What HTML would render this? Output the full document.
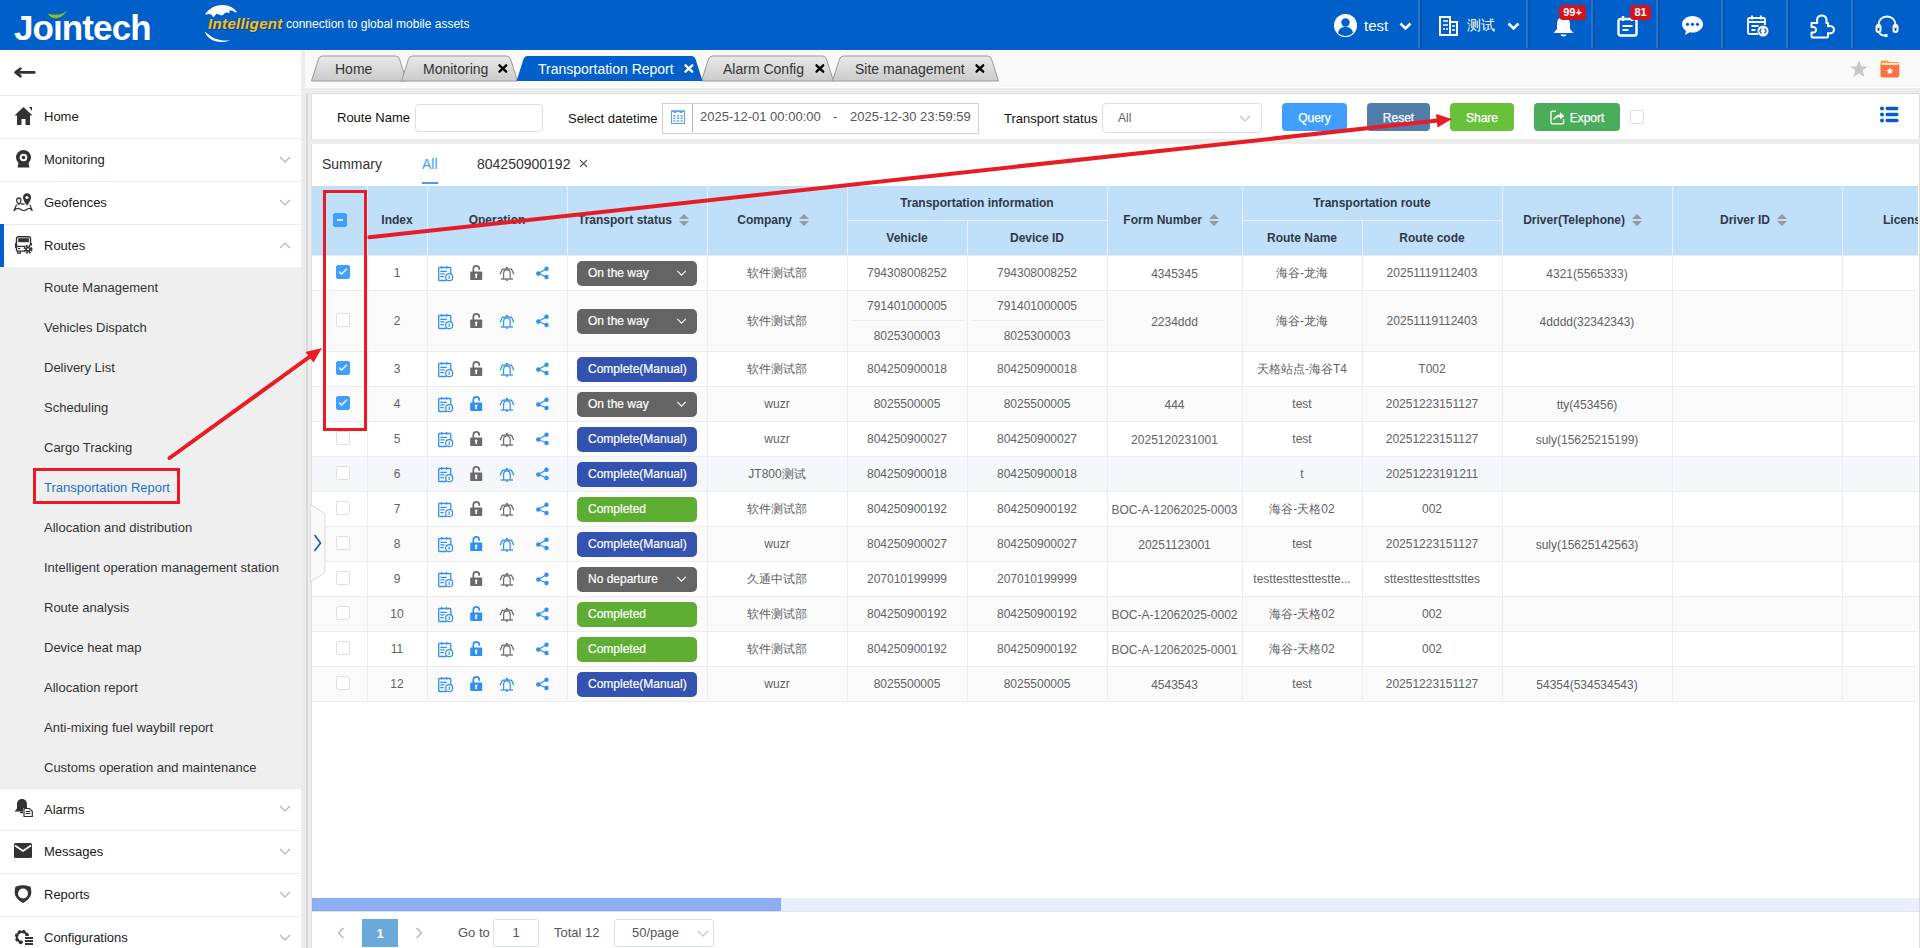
<!DOCTYPE html><html><head><meta charset="utf-8"><title>Transportation Report</title><style>
*{box-sizing:border-box;margin:0;padding:0}
html,body{width:1920px;height:948px;overflow:hidden}
body{position:relative;font-family:"Liberation Sans",sans-serif;background:#ececec;color:#333}
.a{position:absolute}
.t{position:absolute;white-space:nowrap;line-height:1}
svg{display:block;position:absolute;overflow:visible}
.sep{position:absolute;top:0;width:4px;height:48px;border-left:2px solid #2472d0;border-right:2px solid #0b52a8}
.mi{position:absolute;left:0;width:301px;height:43px;background:#fff;border-top:1px solid #e8eaf0}
.mi .tx{position:absolute;left:44px;top:14px;font-size:13px;color:#1a1a1a;line-height:1;white-space:nowrap}
.sm{position:absolute;left:44px;font-size:13px;color:#333;line-height:1;white-space:nowrap}
.cell{position:absolute;text-align:center;white-space:nowrap;line-height:1;font-size:12px;color:#606266}
.hd{position:absolute;text-align:center;white-space:nowrap;line-height:1;font-size:12px;font-weight:bold;color:#2f3847}
.hdl{position:absolute;white-space:nowrap;line-height:1;font-size:12px;font-weight:bold;color:#2f3847}
.vl{position:absolute;width:1px;background:#ebeef5}
.hl{position:absolute;height:1px;background:#ebeef5}
.cb{position:absolute;width:14px;height:14px;border:1px solid #dcdfe6;border-radius:2px;background:#fff}
.cbon{background:#409eff;border-color:#409eff}
.st{position:absolute;left:577px;width:120px;height:25px;border-radius:5px;color:#fff;font-size:12px;line-height:25px;padding-left:11px;white-space:nowrap;-webkit-text-stroke:0.2px #fff}
.btn{position:absolute;top:103px;height:28px;border-radius:4px;color:#fff;font-size:12px;line-height:30px;text-align:center;-webkit-text-stroke:0.25px #fff}
</style></head><body>
<div class="a" style="left:0;top:0;width:1920px;height:50px;background:#005fc8"></div>
<div class="t" style="left:14px;top:10px;font-size:35px;font-weight:bold;color:#fff;letter-spacing:-0.9px">Jo&#305;ntech</div>
<svg style="left:47px;top:9px" width="22" height="12" viewBox="0 0 22 12"><path d="M1 4.5 C3.5 10.5 13 12.5 20.5 1 C15 6.2 8 7 1 4.5Z" fill="#86c11c"/></svg>
<svg style="left:204px;top:4px" width="36" height="38" viewBox="0 0 36 38"><path d="M1 10.5 C5 4 12 1 19 1 C25 1 30 4 33 8 L31 8.5 C29 6.5 27 6 25 7 C26 8 26 9 24 9 C22 8 21 9 20 10 C19 11 18 12 16 11 C15 10 14 10 12 10 C11 12 10 13 9 13 C8 11 7 10 5 10 C4 10 3 10.5 1 10.5Z" fill="#fff"/><path d="M0.5 27.5 C3 34 10 38 17 38 C20 38 23 37.5 26 36.5 C20 37 13 36 8 33 C5 31 3 29 0.5 27.5Z" fill="#fff"/></svg>
<div class="t" style="left:208px;top:16px;font-size:15px;letter-spacing:0.35px;font-weight:bold;font-style:italic;color:#fdc010;text-shadow:1px 1px 1px rgba(0,40,100,.5)">Intelligent</div>
<div class="t" style="left:286px;top:18px;font-size:12px;color:#fff">connection to global mobile assets</div>
<div class="sep" style="left:1418px"></div>
<div class="sep" style="left:1526px"></div>
<div class="sep" style="left:1591px"></div>
<div class="sep" style="left:1656px"></div>
<div class="sep" style="left:1721px"></div>
<div class="sep" style="left:1786px"></div>
<div class="sep" style="left:1851px"></div>
<svg style="left:1334px;top:14px" width="23" height="23" viewBox="0 0 23 23"><circle cx="11.5" cy="11.5" r="11.5" fill="#fff"/><circle cx="11.5" cy="8.5" r="4.2" fill="#005fc8"/><path d="M4 19 C5 14 8 13 11.5 13 C15 13 18 14 19 19 C17 21 14 22 11.5 22 C9 22 6 21 4 19Z" fill="#005fc8"/></svg>
<div class="t" style="left:1364px;top:18px;font-size:15px;color:#fff">test</div>
<svg style="left:1399px;top:22px" width="13" height="9" viewBox="0 0 13 9"><path d="M1.5 1.5 L6.5 6.5 L11.5 1.5" fill="none" stroke="#fff" stroke-width="2.6"/></svg>
<svg style="left:1439px;top:16px" width="19" height="20" viewBox="0 0 19 20"><path d="M1 1 H11 V19 H1Z M11 6 H18 V19 H11" fill="none" stroke="#fff" stroke-width="2"/><path d="M4 5h5M4 9h5M4 13h2M7 13h2M13 10h3M13 14h3" stroke="#fff" stroke-width="1.6"/></svg>
<div class="t" style="left:1467px;top:18px;font-size:14px;color:#fff">测试</div>
<svg style="left:1507px;top:22px" width="13" height="9" viewBox="0 0 13 9"><path d="M1.5 1.5 L6.5 6.5 L11.5 1.5" fill="none" stroke="#fff" stroke-width="2.6"/></svg>
<svg style="left:1552px;top:16px" width="23" height="22" viewBox="0 0 23 22"><path d="M11.5 1 C6 1 5 5 5 9 V13 L1.5 17 H21.5 L18 13 V9 C18 5 17 1 11.5 1Z" fill="#fff"/><path d="M8.5 18.5 C9 21 14 21 14.5 18.5Z" fill="#fff"/></svg>
<div class="a" style="left:1559px;top:5px;width:27px;height:15px;background:#d4141c;border-radius:4px"></div>
<div class="t" style="left:1561px;top:7px;font-size:11px;color:#fff;font-weight:bold;width:23px;text-align:center">99+</div>
<svg style="left:1617px;top:15px" width="21" height="22" viewBox="0 0 21 22"><rect x="1.5" y="4" width="18" height="16.5" rx="2" fill="none" stroke="#fff" stroke-width="2.4"/><path d="M6 1v5M15 1v5" stroke="#fff" stroke-width="2.4"/><path d="M5.5 11h10M5.5 15h6" stroke="#fff" stroke-width="2.2"/></svg>
<div class="a" style="left:1630px;top:5px;width:21px;height:15px;background:#d4141c;border-radius:4px"></div>
<div class="t" style="left:1630px;top:7px;font-size:11px;color:#fff;font-weight:bold;width:21px;text-align:center">81</div>
<svg style="left:1681px;top:15px" width="23" height="21" viewBox="0 0 23 21"><path d="M11.5 1 C5.5 1 1 4.8 1 9.3 C1 12 2.6 14.3 5 15.8 L4 20 L8.8 17.3 C9.7 17.5 10.6 17.6 11.5 17.6 C17.5 17.6 22 13.8 22 9.3 C22 4.8 17.5 1 11.5 1Z" fill="#fff"/><circle cx="6.5" cy="9.3" r="1.6" fill="#005fc8"/><circle cx="11.5" cy="9.3" r="1.6" fill="#005fc8"/><circle cx="16.5" cy="9.3" r="1.6" fill="#005fc8"/></svg>
<svg style="left:1746px;top:14px" width="23" height="23" viewBox="0 0 23 23"><path d="M12 20H3.5C2.5 20 2 19.5 2 18.5V5.5C2 4.5 2.5 4 3.5 4H17.5C18.5 4 19 4.5 19 5.5V11" fill="none" stroke="#fff" stroke-width="1.8"/><path d="M6 1.5v4M15 1.5v4M2 8h17M5.5 12h7M5.5 16h4" stroke="#fff" stroke-width="1.8"/><circle cx="17" cy="17" r="5.5" fill="#fff"/><path d="M15.5 14.5 L13.8 17 L15.5 19.5 M18.5 14.5 L20.2 17 L18.5 19.5" stroke="#005fc8" stroke-width="1.3" fill="none"/></svg>
<svg style="left:1810px;top:14px" width="26" height="25" viewBox="0 0 26 25"><path d="M1.5 9 H7.3 C6.3 5 7.6 1.5 11.8 1.5 C16 1.5 17.3 5 16.3 9 H18 V12.3 C22 11.3 24 13.5 24 15.7 C24 17.9 22 20.1 18 19.1 V22.2 C18 23 17.5 23.5 16.7 23.5 H2.8 C2 23.5 1.5 23 1.5 22.2 V18.5 C5 19 6 17.5 6 15.8 C6 14.1 5 12.6 1.5 13.1 Z" fill="none" stroke="#fff" stroke-width="2" stroke-linejoin="round"/></svg>
<svg style="left:1875px;top:14px" width="24" height="24" viewBox="0 0 24 24"><path d="M3.5 14 V11 C3.5 6 7 2.5 12 2.5 C17 2.5 20.5 6 20.5 11 V14" fill="none" stroke="#fff" stroke-width="2"/><rect x="1.5" y="11" width="4" height="7" rx="2" fill="none" stroke="#fff" stroke-width="2"/><rect x="18.5" y="11" width="4" height="7" rx="2" fill="none" stroke="#fff" stroke-width="2"/><path d="M4 18 C5 21 8 21.5 10 21.5" fill="none" stroke="#fff" stroke-width="2"/><circle cx="11" cy="21.5" r="1.8" fill="#fff"/></svg>
<div class="a" style="left:0;top:50px;width:301px;height:898px;background:#fff"></div>
<svg style="left:14px;top:66px" width="22" height="13" viewBox="0 0 22 13"><path d="M2.5 6.4H20.3" stroke="#333" stroke-width="2.7" stroke-linecap="round"/><path d="M6.4 2.7L1.6 6.4L6.4 10.1" fill="none" stroke="#333" stroke-width="2.7" stroke-linecap="round" stroke-linejoin="round"/></svg>
<div class="mi" style="top:95px"><div class="tx">Home</div></div>
<div class="mi" style="top:138px"><div class="tx">Monitoring</div></div>
<div class="mi" style="top:181px"><div class="tx">Geofences</div></div>
<div class="mi" style="top:224px"><div class="tx">Routes</div></div>
<div class="a" style="left:0;top:224px;width:4px;height:43px;background:#005fc8"></div>
<div class="a" style="left:0;top:267px;width:301px;height:521px;background:#efefef"></div>
<div class="sm" style="top:281px;color:#333">Route Management</div>
<div class="sm" style="top:321px;color:#333">Vehicles Dispatch</div>
<div class="sm" style="top:361px;color:#333">Delivery List</div>
<div class="sm" style="top:401px;color:#333">Scheduling</div>
<div class="sm" style="top:441px;color:#333">Cargo Tracking</div>
<div class="sm" style="top:481px;color:#1a73c8">Transportation Report</div>
<div class="sm" style="top:521px;color:#333">Allocation and distribution</div>
<div class="sm" style="top:561px;color:#333">Intelligent operation management station</div>
<div class="sm" style="top:601px;color:#333">Route analysis</div>
<div class="sm" style="top:641px;color:#333">Device heat map</div>
<div class="sm" style="top:681px;color:#333">Allocation report</div>
<div class="sm" style="top:721px;color:#333">Anti-mixing fuel waybill report</div>
<div class="sm" style="top:761px;color:#333">Customs operation and maintenance</div>
<div class="mi" style="top:788px"><div class="tx">Alarms</div></div>
<div class="mi" style="top:830px"><div class="tx">Messages</div></div>
<div class="mi" style="top:873px"><div class="tx">Reports</div></div>
<div class="mi" style="top:916px"><div class="tx">Configurations</div></div>
<svg style="left:279px;top:156px" width="12" height="7" viewBox="0 0 12 7"><path d="M1 1 L6 6 L11 1" fill="none" stroke="#b0b3b8" stroke-width="1.2"/></svg>
<svg style="left:279px;top:199px" width="12" height="7" viewBox="0 0 12 7"><path d="M1 1 L6 6 L11 1" fill="none" stroke="#b0b3b8" stroke-width="1.2"/></svg>
<svg style="left:279px;top:242px" width="12" height="7" viewBox="0 0 12 7"><path d="M1 6 L6 1 L11 6" fill="none" stroke="#b0b3b8" stroke-width="1.2"/></svg>
<svg style="left:279px;top:805px" width="12" height="7" viewBox="0 0 12 7"><path d="M1 1 L6 6 L11 1" fill="none" stroke="#b0b3b8" stroke-width="1.2"/></svg>
<svg style="left:279px;top:848px" width="12" height="7" viewBox="0 0 12 7"><path d="M1 1 L6 6 L11 1" fill="none" stroke="#b0b3b8" stroke-width="1.2"/></svg>
<svg style="left:279px;top:891px" width="12" height="7" viewBox="0 0 12 7"><path d="M1 1 L6 6 L11 1" fill="none" stroke="#b0b3b8" stroke-width="1.2"/></svg>
<svg style="left:279px;top:934px" width="12" height="7" viewBox="0 0 12 7"><path d="M1 1 L6 6 L11 1" fill="none" stroke="#b0b3b8" stroke-width="1.2"/></svg>
<svg style="left:14px;top:106px" width="19" height="20" viewBox="0 0 19 20"><path d="M9.5 1 L0.5 9.5 H3 V19 H7.5 V13 H11.5 V19 H16 V9.5 H18.5 Z" fill="#333"/><path d="M15 1 H18 V5Z" fill="#333"/></svg>
<svg style="left:15px;top:150px" width="17" height="18" viewBox="0 0 17 18"><circle cx="8.5" cy="7.5" r="7.5" fill="#333"/><circle cx="8.5" cy="7.5" r="3.8" fill="#fff"/><circle cx="8.5" cy="7.5" r="1.8" fill="#333"/><path d="M3.5 13 L2.5 17.5 H14.5 L13.5 13Z" fill="#333"/></svg>
<svg style="left:13px;top:192px" width="20" height="20" viewBox="0 0 20 20"><path d="M14 1.2C11.6 1.2 10 3 10 5.4C10 8.4 14 13.6 14 13.6C14 13.6 18 8.4 18 5.4C18 3 16.4 1.2 14 1.2Z" fill="#333"/><circle cx="14" cy="5.5" r="1.6" fill="#fff"/><path d="M5.8 12.3C5.8 12.3 3.7 10.2 3.7 8.4C3.7 7 4.6 6 5.8 6C7 6 7.9 7 7.9 8.4C7.9 10.2 5.8 12.3 5.8 12.3Z" fill="none" stroke="#333" stroke-width="1.3"/><path d="M3.6 12.6L1 18.6Q3.5 15.9 6 16.6Q8.8 18.4 10.5 18.5Q12.6 18.6 14.8 16.8Q17.3 15.5 19.2 18.6L16.9 12.6M7.4 11.6L11.6 12.3" fill="none" stroke="#333" stroke-width="1.2" stroke-linejoin="round"/></svg>
<svg style="left:15px;top:236px" width="18" height="18" viewBox="0 0 18 18"><path d="M1.5 15V2.5C1.5 1.4 2.2 0.7 3.3 0.7H13.7C14.8 0.7 15.5 1.4 15.5 2.5V9" fill="none" stroke="#333" stroke-width="1.4"/><rect x="3.2" y="2.2" width="10.7" height="4" fill="#333"/><path d="M0.6 7V12M16.4 7V9.5" stroke="#333" stroke-width="1.3"/><path d="M1.5 10.3H10.5M3 12.6H5.2M1.5 15.1H9.5M2.6 15V17.2H5.4V15" fill="none" stroke="#333" stroke-width="1.3"/><circle cx="13" cy="13.3" r="3.4" fill="none" stroke="#333" stroke-width="2.2" stroke-dasharray="1.7 1"/><circle cx="13" cy="13.3" r="2.6" fill="#333"/><circle cx="13" cy="13.3" r="1" fill="#fff"/></svg>
<svg style="left:14px;top:798px" width="19" height="19" viewBox="0 0 19 19"><path d="M8 1 C4.5 1 3 3.5 3 7 V10.5 L0.5 13.5 H9 V10 H13 V7 C13 3.5 11.5 1 8 1Z" fill="#333"/><path d="M6 14.5 H9" stroke="#333" stroke-width="1.5"/><path d="M10 10.5 H15.5 L18.3 13.3 V18.5 H10Z" fill="#fff" stroke="#333" stroke-width="1.2"/><path d="M11.8 13.5h4.5M11.8 15.5h4.5" stroke="#333" stroke-width="1"/></svg>
<svg style="left:14px;top:843px" width="18" height="15" viewBox="0 0 18 15"><rect x="0" y="0" width="18" height="15" rx="1.5" fill="#333"/><path d="M1 2.5 L9 8 L17 2.5" fill="none" stroke="#fff" stroke-width="1.6"/></svg>
<svg style="left:14px;top:885px" width="18" height="18" viewBox="0 0 18 18"><path d="M4 1 C2 1 0.5 2.5 1 4.5 C0.5 6 0.5 9 1.5 11 C3 14 5.5 16 9 18 C12.5 16 15 14 16.5 11 C17.5 9 17.5 6 17 4.5 C17.5 2.5 16 1 14 1 C12.5 0.3 10.5 0.2 9 0.3 C7.5 0.2 5.5 0.3 4 1Z" fill="#333"/><circle cx="9" cy="8.5" r="5" fill="#fff"/></svg>
<svg style="left:14px;top:927px" width="19" height="21" viewBox="0 0 19 21"><circle cx="8" cy="10" r="5.5" fill="none" stroke="#333" stroke-width="3.4" stroke-dasharray="2.6 1.7"/><circle cx="8" cy="10" r="5.2" fill="none" stroke="#333" stroke-width="2"/><rect x="9" y="9" width="10" height="12" fill="#fff"/><path d="M11 11h8M11 14h8M11 17h8" stroke="#333" stroke-width="1.8"/></svg>
<div class="a" style="left:305px;top:50px;width:1615px;height:38px;background:#f9f9f9;border-bottom:1px solid #fff"></div>
<svg style="left:0;top:0" width="1920" height="90" viewBox="0 0 1920 90"><defs><linearGradient id="tg" x1="0" y1="0" x2="0" y2="1"><stop offset="0" stop-color="#e9e9e9"/><stop offset="1" stop-color="#cbcbcb"/></linearGradient></defs>
<path d="M311.5 81 L318.5 59 Q319.7 56 322.5 56 L395.5 56 Q398.3 56 399.5 59 L406.5 81 Z" fill="url(#tg)" stroke="#9a9a9a" stroke-width="1"/>
<path d="M401.5 81 L408.5 59 Q409.7 56 412.5 56 L506.5 56 Q509.3 56 510.5 59 L517.5 81 Z" fill="url(#tg)" stroke="#9a9a9a" stroke-width="1"/>
<path d="M701.5 81 L708.5 59 Q709.7 56 712.5 56 L822.5 56 Q825.3 56 826.5 59 L833.5 81 Z" fill="url(#tg)" stroke="#9a9a9a" stroke-width="1"/>
<path d="M832.5 81 L839.5 59 Q840.7 56 843.5 56 L987.5 56 Q990.3 56 991.5 59 L998.5 81 Z" fill="url(#tg)" stroke="#9a9a9a" stroke-width="1"/>
<path d="M516.5 81 L523.5 59 Q524.7 56 527.5 56 L691.5 56 Q694.3 56 695.5 59 L702.5 81 Z" fill="#005fc8"/>
</svg>
<div class="t" style="left:335px;top:62px;font-size:14px;color:#333">Home</div>
<div class="t" style="left:423px;top:62px;font-size:14px;color:#333">Monitoring</div>
<svg style="left:498px;top:64px" width="10" height="9" viewBox="0 0 10 9"><path d="M1.5 1.3L8.2 7.7M8.2 1.3L1.5 7.7" stroke="#000" stroke-width="2.3" stroke-linecap="round"/></svg>
<div class="t" style="left:723px;top:62px;font-size:14px;color:#333">Alarm Config</div>
<svg style="left:815px;top:64px" width="10" height="9" viewBox="0 0 10 9"><path d="M1.5 1.3L8.2 7.7M8.2 1.3L1.5 7.7" stroke="#000" stroke-width="2.3" stroke-linecap="round"/></svg>
<div class="t" style="left:855px;top:62px;font-size:14px;color:#333">Site management</div>
<svg style="left:975px;top:64px" width="10" height="9" viewBox="0 0 10 9"><path d="M1.5 1.3L8.2 7.7M8.2 1.3L1.5 7.7" stroke="#000" stroke-width="2.3" stroke-linecap="round"/></svg>
<div class="t" style="left:538px;top:62px;font-size:14px;color:#fff">Transportation Report</div>
<svg style="left:684px;top:64px" width="10" height="9" viewBox="0 0 10 9"><path d="M1.5 1.3L8.2 7.7M8.2 1.3L1.5 7.7" stroke="#fff" stroke-width="2.3" stroke-linecap="round"/></svg>
<svg style="left:1850px;top:60px" width="18" height="18" viewBox="0 0 18 18"><path d="M9 0.3 L11.3 6.2 L17.7 6.6 L12.7 10.6 L14.4 17 L9 13.4 L3.6 17 L5.3 10.6 L0.3 6.6 L6.7 6.2Z" fill="#c8c8c8"/></svg>
<svg style="left:1880px;top:60px" width="20" height="18" viewBox="0 0 20 18"><path d="M0.5 3 C0.5 1.2 1.2 0.5 2.5 0.5 H7.5 L9.5 2 H17.5 C18.8 2 19.3 2.8 19.3 4 V6 H0.5Z" fill="#ffa033"/><rect x="2" y="3.2" width="16" height="1.5" fill="#fff"/><path d="M0.5 5 H19.3 V15.5 C19.3 16.8 18.6 17.5 17.3 17.5 H2.5 C1.2 17.5 0.5 16.8 0.5 15.5Z" fill="#ff7143"/><path d="M9.9 7.3 L11 9.8 L13.6 10 L11.6 11.7 L12.3 14.3 L9.9 12.8 L7.5 14.3 L8.2 11.7 L6.2 10 L8.8 9.8Z" fill="#fff"/></svg>
<div class="a" style="left:306px;top:93px;width:2px;height:855px;background:#d9d9d9"></div>
<div class="a" style="left:311px;top:93px;width:1609px;height:46px;background:#fff;border-left:1px solid #e0e0e0;border-top:1px solid #dcdcdc;border-right:1px solid #dadada"></div>
<div class="a" style="left:311px;top:144px;width:1609px;height:804px;background:#fff;border-left:1px solid #e0e0e0;border-right:1px solid #dadada"></div>
<div class="t" style="left:337px;top:111px;font-size:13px;color:#111">Route Name</div>
<div class="a" style="left:415px;top:104px;width:128px;height:28px;border:1px solid #dcdfe6;border-radius:4px;background:#fff"></div>
<div class="t" style="left:568px;top:112px;font-size:13px;color:#111">Select datetime</div>
<div class="a" style="left:662px;top:103px;width:317px;height:31px;border:1px solid #cfd1d6;background:#fff"></div>
<div class="a" style="left:692px;top:104px;width:1px;height:28px;background:#aeb2ba"></div>
<svg style="left:671px;top:110px" width="14" height="14" viewBox="0 0 14 14"><rect x="0.5" y="1" width="13" height="12.5" fill="none" stroke="#5aa3e8" stroke-width="1"/><path d="M0.5 0.5 H13.5 V1.5 L10 3.2 L7 1.5 L4 3.2 L0.5 1.5Z" fill="#5aa3e8"/><g fill="#5aa3e8"><rect x="2.3" y="5.1" width="2.2" height="1.5"/><rect x="6" y="5.1" width="2.2" height="1.5"/><rect x="9.6" y="5.1" width="2.2" height="1.5"/><rect x="2.3" y="7.6" width="2.2" height="1.4"/><rect x="6" y="7.6" width="2.2" height="1.4"/><rect x="9.6" y="7.6" width="2.2" height="1.4"/><rect x="2.3" y="10.3" width="2.2" height="1.4"/><rect x="6" y="10.3" width="2.2" height="1.4"/><rect x="9.6" y="10.3" width="2.2" height="1.4"/></g></svg>
<div class="t" style="left:700px;top:110px;font-size:13px;color:#555">2025-12-01 00:00:00</div>
<div class="t" style="left:833px;top:110px;font-size:13px;color:#555">-</div>
<div class="t" style="left:850px;top:110px;font-size:13px;color:#555">2025-12-30 23:59:59</div>
<div class="t" style="left:1004px;top:112px;font-size:13px;color:#111">Transport status</div>
<div class="a" style="left:1102px;top:103px;width:160px;height:30px;border:1px solid #dcdfe6;border-radius:4px;background:#fff"></div>
<div class="t" style="left:1118px;top:112px;font-size:12px;color:#606266">All</div>
<svg style="left:1239px;top:115px" width="12" height="7" viewBox="0 0 12 7"><path d="M1 1 L6 6 L11 1" fill="none" stroke="#c0c4cc" stroke-width="1.2"/></svg>
<div class="btn" style="left:1282px;width:65px;background:#409eff">Query</div>
<div class="btn" style="left:1367px;width:63px;background:#527dab">Reset</div>
<div class="btn" style="left:1450px;width:64px;background:#67c23a">Share</div>
<div class="btn" style="left:1534px;width:86px;background:#4aad5a;padding-left:20px">Export</div>
<svg style="left:1550px;top:110px" width="15" height="15" viewBox="0 0 15 15"><path d="M6 1.2H2.2C1.5 1.2 1 1.7 1 2.4V12.6C1 13.3 1.5 13.8 2.2 13.8H12.4C13.1 13.8 13.6 13.3 13.6 12.6V9" fill="none" stroke="#fff" stroke-width="1.3"/><path d="M3.2 10.5C4 6.8 7 4.8 10 4.6V2.2L14.3 5.9L10 9.5V7.1C7.4 7.1 5.2 8.2 3.2 10.5Z" fill="#fff"/></svg>
<div class="cb" style="left:1630px;top:110px"></div>
<svg style="left:1880px;top:106px" width="19" height="17" viewBox="0 0 19 17"><g fill="#005fc8"><circle cx="2" cy="2.5" r="2"/><circle cx="2" cy="8.5" r="2"/><circle cx="2" cy="14.5" r="2"/><rect x="5.5" y="0.8" width="13" height="3.4" rx="1.7"/><rect x="5.5" y="6.8" width="13" height="3.4" rx="1.7"/><rect x="5.5" y="12.8" width="13" height="3.4" rx="1.7"/></g></svg>
<div class="t" style="left:322px;top:157px;font-size:14px;color:#333">Summary</div>
<div class="t" style="left:422px;top:157px;font-size:14px;color:#409eff">All</div>
<div class="a" style="left:422px;top:182px;width:16px;height:2px;background:#409eff"></div>
<div class="t" style="left:477px;top:157px;font-size:14px;color:#333">804250900192</div>
<svg style="left:579px;top:159px" width="9" height="9" viewBox="0 0 9 9"><path d="M1 1L8 8M8 1L1 8" stroke="#555" stroke-width="1.1"/></svg>
<div class="a" style="left:312px;top:186px;width:1606px;height:69px;background:#c0dff9"></div>
<div class="a" style="left:367px;top:186px;width:1px;height:69px;background:#e6f1fc"></div>
<div class="a" style="left:427px;top:186px;width:1px;height:69px;background:#e6f1fc"></div>
<div class="a" style="left:567px;top:186px;width:1px;height:69px;background:#e6f1fc"></div>
<div class="a" style="left:707px;top:186px;width:1px;height:69px;background:#e6f1fc"></div>
<div class="a" style="left:847px;top:186px;width:1px;height:69px;background:#e6f1fc"></div>
<div class="a" style="left:967px;top:220px;width:1px;height:35px;background:#e6f1fc"></div>
<div class="a" style="left:1107px;top:186px;width:1px;height:69px;background:#e6f1fc"></div>
<div class="a" style="left:1242px;top:186px;width:1px;height:69px;background:#e6f1fc"></div>
<div class="a" style="left:1362px;top:220px;width:1px;height:35px;background:#e6f1fc"></div>
<div class="a" style="left:1502px;top:186px;width:1px;height:69px;background:#e6f1fc"></div>
<div class="a" style="left:1672px;top:186px;width:1px;height:69px;background:#e6f1fc"></div>
<div class="a" style="left:1842px;top:186px;width:1px;height:69px;background:#e6f1fc"></div>
<div class="a" style="left:848px;top:220px;width:259px;height:1px;background:#e6f1fc"></div>
<div class="a" style="left:1243px;top:220px;width:259px;height:1px;background:#e6f1fc"></div>
<div class="cb cbon" style="left:333px;top:213px"><div class="a" style="left:3px;top:5px;width:6px;height:2px;background:#d6eaff"></div></div>
<div class="hd" style="left:367px;top:214px;width:60px">Index</div>
<div class="hd" style="left:427px;top:214px;width:140px">Operation</div>
<div class="hd" style="left:847px;top:197px;width:260px">Transportation information</div>
<div class="hd" style="left:847px;top:232px;width:120px">Vehicle</div>
<div class="hd" style="left:967px;top:232px;width:140px">Device ID</div>
<div class="hd" style="left:1242px;top:197px;width:260px">Transportation route</div>
<div class="hd" style="left:1242px;top:232px;width:120px">Route Name</div>
<div class="hd" style="left:1362px;top:232px;width:140px">Route code</div>
<div class="hdl" style="right:1248px;top:214px">Transport status</div>
<svg style="left:679px;top:214px" width="10" height="12" viewBox="0 0 10 12"><path d="M5 0L10 5H0Z M5 12L0 7H10Z" fill="#9a9a9a"/></svg>
<div class="hdl" style="right:1128px;top:214px">Company</div>
<svg style="left:799px;top:214px" width="10" height="12" viewBox="0 0 10 12"><path d="M5 0L10 5H0Z M5 12L0 7H10Z" fill="#9a9a9a"/></svg>
<div class="hdl" style="right:718px;top:214px">Form Number</div>
<svg style="left:1209px;top:214px" width="10" height="12" viewBox="0 0 10 12"><path d="M5 0L10 5H0Z M5 12L0 7H10Z" fill="#9a9a9a"/></svg>
<div class="hdl" style="right:295px;top:214px">Driver(Telephone)</div>
<svg style="left:1632px;top:214px" width="10" height="12" viewBox="0 0 10 12"><path d="M5 0L10 5H0Z M5 12L0 7H10Z" fill="#9a9a9a"/></svg>
<div class="hdl" style="right:150px;top:214px">Driver ID</div>
<svg style="left:1777px;top:214px" width="10" height="12" viewBox="0 0 10 12"><path d="M5 0L10 5H0Z M5 12L0 7H10Z" fill="#9a9a9a"/></svg>
<div class="a" style="left:1883px;top:210px;width:35px;height:20px;overflow:hidden"><div class="hdl" style="left:0;top:4px">License</div></div>
<div class="hl" style="left:312px;top:255px;width:1606px;background:#e3eefa"></div>
<div class="a" style="left:312px;top:256px;width:1606px;height:35px;background:#fff"></div>
<div class="hl" style="left:312px;top:290px;width:1606px"></div>
<div class="cb cbon" style="left:336px;top:265px"><svg style="left:1px;top:1px" width="12" height="12" viewBox="0 0 12 12"><path d="M1.1 4.6L3.6 7.1L9 1.6" fill="none" stroke="#e2f0ff" stroke-width="1.5"/></svg></div>
<div class="cell" style="left:367px;width:60px;top:267px">1</div>
<svg style="left:438px;top:266px" width="16" height="16" viewBox="0 0 16 16"><path d="M8.5 14.5H1.5C1 14.5 0.7 14.2 0.7 13.7V2.3C0.7 1.8 1 1.5 1.5 1.5H12C12.5 1.5 12.8 1.8 12.8 2.3V8" fill="none" stroke="#2f8ff2" stroke-width="1.3"/><path d="M3.7 0v2.5M8.6 0v2.5" stroke="#2f8ff2" stroke-width="1.2"/><path d="M2.3 5.3h6.5M2.3 7.8h4.3M2.3 10.6h3.5" stroke="#2f8ff2" stroke-width="1.3"/><circle cx="11.2" cy="11.2" r="3.5" fill="#fff" stroke="#2f8ff2" stroke-width="1.2"/><path d="M11.2 9.6v3.4" stroke="#2f8ff2" stroke-width="1.2"/></svg>
<svg style="left:470px;top:265px" width="13" height="16" viewBox="0 0 13 16"><path d="M3.3 7V4.2C3.3 2.2 4.6 0.9 6.3 0.9C8 0.9 9.3 2.2 9.3 4.2V4.7" fill="none" stroke="#6a6a6a" stroke-width="1.7"/><rect x="0.2" y="6.5" width="12" height="8.6" rx="0.8" fill="#6a6a6a"/><rect x="5.4" y="9.5" width="1.6" height="3.6" fill="#fff"/><circle cx="6.2" cy="9.6" r="1.2" fill="#fff"/></svg>
<svg style="left:499px;top:266px" width="16" height="16" viewBox="0 0 16 16"><path d="M3.4 3.3 Q7.9 2.5 12.5 3.3 M3.4 3.3 L1.3 7.7 M12.5 3.3 L14.6 7.7" fill="none" stroke="#6a6a6a" stroke-width="1.3" stroke-linecap="round"/><path d="M4.6 12.8V7.4C4.6 5 6 3.9 7.9 3.9C9.8 3.9 11.2 5 11.2 7.4V12.8" fill="none" stroke="#6a6a6a" stroke-width="1.2"/><path d="M1.8 13H14" stroke="#6a6a6a" stroke-width="1.3"/><circle cx="7.9" cy="1.9" r="1.05" fill="#6a6a6a"/><circle cx="7.9" cy="14.1" r="1" fill="#6a6a6a"/></svg>
<svg style="left:536px;top:266px" width="14" height="14" viewBox="0 0 14 14"><path d="M10.5 2.8L2.3 7.5L10.5 11" fill="none" stroke="#2f8ff2" stroke-width="1.1"/><circle cx="10.5" cy="2.8" r="2.2" fill="#2f8ff2"/><circle cx="2.3" cy="7.5" r="2.2" fill="#2f8ff2"/><circle cx="10.5" cy="11" r="2.2" fill="#2f8ff2"/></svg>
<div class="st" style="top:261px;background:#646464">On the way</div>
<svg style="left:676px;top:269px" width="11" height="9" viewBox="0 0 13 9"><path d="M1.5 1.5 L6.5 6.5 L11.5 1.5" fill="none" stroke="#fff" stroke-width="1.2"/></svg>
<div class="cell" style="left:707px;width:140px;top:267px">软件测试部</div>
<div class="cell" style="left:847px;width:120px;top:267px">794308008252</div>
<div class="cell" style="left:967px;width:140px;top:267px">794308008252</div>
<div class="cell" style="left:1107px;width:135px;top:268px">4345345</div>
<div class="cell" style="left:1242px;width:120px;top:267px">海谷-龙海</div>
<div class="cell" style="left:1362px;width:140px;top:267px">20251119112403</div>
<div class="cell" style="left:1502px;width:170px;top:268px">4321(5565333)</div>
<div class="a" style="left:312px;top:291px;width:1606px;height:61px;background:#fafafa"></div>
<div class="hl" style="left:312px;top:351px;width:1606px"></div>
<div class="cb" style="left:336px;top:313px"></div>
<div class="cell" style="left:367px;width:60px;top:315px">2</div>
<svg style="left:438px;top:314px" width="16" height="16" viewBox="0 0 16 16"><path d="M8.5 14.5H1.5C1 14.5 0.7 14.2 0.7 13.7V2.3C0.7 1.8 1 1.5 1.5 1.5H12C12.5 1.5 12.8 1.8 12.8 2.3V8" fill="none" stroke="#2f8ff2" stroke-width="1.3"/><path d="M3.7 0v2.5M8.6 0v2.5" stroke="#2f8ff2" stroke-width="1.2"/><path d="M2.3 5.3h6.5M2.3 7.8h4.3M2.3 10.6h3.5" stroke="#2f8ff2" stroke-width="1.3"/><circle cx="11.2" cy="11.2" r="3.5" fill="#fff" stroke="#2f8ff2" stroke-width="1.2"/><path d="M11.2 9.6v3.4" stroke="#2f8ff2" stroke-width="1.2"/></svg>
<svg style="left:470px;top:313px" width="13" height="16" viewBox="0 0 13 16"><path d="M3.3 7V4.2C3.3 2.2 4.6 0.9 6.3 0.9C8 0.9 9.3 2.2 9.3 4.2V4.7" fill="none" stroke="#6a6a6a" stroke-width="1.7"/><rect x="0.2" y="6.5" width="12" height="8.6" rx="0.8" fill="#6a6a6a"/><rect x="5.4" y="9.5" width="1.6" height="3.6" fill="#fff"/><circle cx="6.2" cy="9.6" r="1.2" fill="#fff"/></svg>
<svg style="left:499px;top:314px" width="16" height="16" viewBox="0 0 16 16"><path d="M3.4 3.3 Q7.9 2.5 12.5 3.3 M3.4 3.3 L1.3 7.7 M12.5 3.3 L14.6 7.7" fill="none" stroke="#2f8ff2" stroke-width="1.3" stroke-linecap="round"/><path d="M4.6 12.8V7.4C4.6 5 6 3.9 7.9 3.9C9.8 3.9 11.2 5 11.2 7.4V12.8" fill="none" stroke="#2f8ff2" stroke-width="1.2"/><path d="M1.8 13H14" stroke="#2f8ff2" stroke-width="1.3"/><circle cx="7.9" cy="1.9" r="1.05" fill="#2f8ff2"/><circle cx="7.9" cy="14.1" r="1" fill="#2f8ff2"/></svg>
<svg style="left:536px;top:314px" width="14" height="14" viewBox="0 0 14 14"><path d="M10.5 2.8L2.3 7.5L10.5 11" fill="none" stroke="#2f8ff2" stroke-width="1.1"/><circle cx="10.5" cy="2.8" r="2.2" fill="#2f8ff2"/><circle cx="2.3" cy="7.5" r="2.2" fill="#2f8ff2"/><circle cx="10.5" cy="11" r="2.2" fill="#2f8ff2"/></svg>
<div class="st" style="top:309px;background:#646464">On the way</div>
<svg style="left:676px;top:317px" width="11" height="9" viewBox="0 0 13 9"><path d="M1.5 1.5 L6.5 6.5 L11.5 1.5" fill="none" stroke="#fff" stroke-width="1.2"/></svg>
<div class="cell" style="left:707px;width:140px;top:315px">软件测试部</div>
<div class="cell" style="left:847px;width:120px;top:300px">791401000005</div>
<div class="cell" style="left:967px;width:140px;top:300px">791401000005</div>
<div class="cell" style="left:847px;width:120px;top:330px">8025300003</div>
<div class="cell" style="left:967px;width:140px;top:330px">8025300003</div>
<div class="hl" style="left:851px;top:320px;width:113px"></div>
<div class="hl" style="left:971px;top:320px;width:133px"></div>
<div class="cell" style="left:1107px;width:135px;top:316px">2234ddd</div>
<div class="cell" style="left:1242px;width:120px;top:315px">海谷-龙海</div>
<div class="cell" style="left:1362px;width:140px;top:315px">20251119112403</div>
<div class="cell" style="left:1502px;width:170px;top:316px">4dddd(32342343)</div>
<div class="a" style="left:312px;top:352px;width:1606px;height:35px;background:#fff"></div>
<div class="hl" style="left:312px;top:386px;width:1606px"></div>
<div class="cb cbon" style="left:336px;top:361px"><svg style="left:1px;top:1px" width="12" height="12" viewBox="0 0 12 12"><path d="M1.1 4.6L3.6 7.1L9 1.6" fill="none" stroke="#e2f0ff" stroke-width="1.5"/></svg></div>
<div class="cell" style="left:367px;width:60px;top:363px">3</div>
<svg style="left:438px;top:362px" width="16" height="16" viewBox="0 0 16 16"><path d="M8.5 14.5H1.5C1 14.5 0.7 14.2 0.7 13.7V2.3C0.7 1.8 1 1.5 1.5 1.5H12C12.5 1.5 12.8 1.8 12.8 2.3V8" fill="none" stroke="#2f8ff2" stroke-width="1.3"/><path d="M3.7 0v2.5M8.6 0v2.5" stroke="#2f8ff2" stroke-width="1.2"/><path d="M2.3 5.3h6.5M2.3 7.8h4.3M2.3 10.6h3.5" stroke="#2f8ff2" stroke-width="1.3"/><circle cx="11.2" cy="11.2" r="3.5" fill="#fff" stroke="#2f8ff2" stroke-width="1.2"/><path d="M11.2 9.6v3.4" stroke="#2f8ff2" stroke-width="1.2"/></svg>
<svg style="left:470px;top:361px" width="13" height="16" viewBox="0 0 13 16"><path d="M3.3 7V4.2C3.3 2.2 4.6 0.9 6.3 0.9C8 0.9 9.3 2.2 9.3 4.2V4.7" fill="none" stroke="#6a6a6a" stroke-width="1.7"/><rect x="0.2" y="6.5" width="12" height="8.6" rx="0.8" fill="#6a6a6a"/><rect x="5.4" y="9.5" width="1.6" height="3.6" fill="#fff"/><circle cx="6.2" cy="9.6" r="1.2" fill="#fff"/></svg>
<svg style="left:499px;top:362px" width="16" height="16" viewBox="0 0 16 16"><path d="M3.4 3.3 Q7.9 2.5 12.5 3.3 M3.4 3.3 L1.3 7.7 M12.5 3.3 L14.6 7.7" fill="none" stroke="#2f8ff2" stroke-width="1.3" stroke-linecap="round"/><path d="M4.6 12.8V7.4C4.6 5 6 3.9 7.9 3.9C9.8 3.9 11.2 5 11.2 7.4V12.8" fill="none" stroke="#2f8ff2" stroke-width="1.2"/><path d="M1.8 13H14" stroke="#2f8ff2" stroke-width="1.3"/><circle cx="7.9" cy="1.9" r="1.05" fill="#2f8ff2"/><circle cx="7.9" cy="14.1" r="1" fill="#2f8ff2"/></svg>
<svg style="left:536px;top:362px" width="14" height="14" viewBox="0 0 14 14"><path d="M10.5 2.8L2.3 7.5L10.5 11" fill="none" stroke="#2f8ff2" stroke-width="1.1"/><circle cx="10.5" cy="2.8" r="2.2" fill="#2f8ff2"/><circle cx="2.3" cy="7.5" r="2.2" fill="#2f8ff2"/><circle cx="10.5" cy="11" r="2.2" fill="#2f8ff2"/></svg>
<div class="st" style="top:357px;background:#3452af">Complete(Manual)</div>
<div class="cell" style="left:707px;width:140px;top:363px">软件测试部</div>
<div class="cell" style="left:847px;width:120px;top:363px">804250900018</div>
<div class="cell" style="left:967px;width:140px;top:363px">804250900018</div>
<div class="cell" style="left:1107px;width:135px;top:364px"></div>
<div class="cell" style="left:1242px;width:120px;top:363px">天格站点-海谷T4</div>
<div class="cell" style="left:1362px;width:140px;top:363px">T002</div>
<div class="cell" style="left:1502px;width:170px;top:364px"></div>
<div class="a" style="left:312px;top:387px;width:1606px;height:35px;background:#fafafa"></div>
<div class="hl" style="left:312px;top:421px;width:1606px"></div>
<div class="cb cbon" style="left:336px;top:396px"><svg style="left:1px;top:1px" width="12" height="12" viewBox="0 0 12 12"><path d="M1.1 4.6L3.6 7.1L9 1.6" fill="none" stroke="#e2f0ff" stroke-width="1.5"/></svg></div>
<div class="cell" style="left:367px;width:60px;top:398px">4</div>
<svg style="left:438px;top:397px" width="16" height="16" viewBox="0 0 16 16"><path d="M8.5 14.5H1.5C1 14.5 0.7 14.2 0.7 13.7V2.3C0.7 1.8 1 1.5 1.5 1.5H12C12.5 1.5 12.8 1.8 12.8 2.3V8" fill="none" stroke="#2f8ff2" stroke-width="1.3"/><path d="M3.7 0v2.5M8.6 0v2.5" stroke="#2f8ff2" stroke-width="1.2"/><path d="M2.3 5.3h6.5M2.3 7.8h4.3M2.3 10.6h3.5" stroke="#2f8ff2" stroke-width="1.3"/><circle cx="11.2" cy="11.2" r="3.5" fill="#fff" stroke="#2f8ff2" stroke-width="1.2"/><path d="M11.2 9.6v3.4" stroke="#2f8ff2" stroke-width="1.2"/></svg>
<svg style="left:470px;top:396px" width="13" height="16" viewBox="0 0 13 16"><path d="M3.3 7V4.2C3.3 2.2 4.6 0.9 6.3 0.9C8 0.9 9.3 2.2 9.3 4.2V4.7" fill="none" stroke="#2f8ff2" stroke-width="1.7"/><rect x="0.2" y="6.5" width="12" height="8.6" rx="0.8" fill="#2f8ff2"/><rect x="5.4" y="9.5" width="1.6" height="3.6" fill="#fff"/><circle cx="6.2" cy="9.6" r="1.2" fill="#fff"/></svg>
<svg style="left:499px;top:397px" width="16" height="16" viewBox="0 0 16 16"><path d="M3.4 3.3 Q7.9 2.5 12.5 3.3 M3.4 3.3 L1.3 7.7 M12.5 3.3 L14.6 7.7" fill="none" stroke="#2f8ff2" stroke-width="1.3" stroke-linecap="round"/><path d="M4.6 12.8V7.4C4.6 5 6 3.9 7.9 3.9C9.8 3.9 11.2 5 11.2 7.4V12.8" fill="none" stroke="#2f8ff2" stroke-width="1.2"/><path d="M1.8 13H14" stroke="#2f8ff2" stroke-width="1.3"/><circle cx="7.9" cy="1.9" r="1.05" fill="#2f8ff2"/><circle cx="7.9" cy="14.1" r="1" fill="#2f8ff2"/></svg>
<svg style="left:536px;top:397px" width="14" height="14" viewBox="0 0 14 14"><path d="M10.5 2.8L2.3 7.5L10.5 11" fill="none" stroke="#2f8ff2" stroke-width="1.1"/><circle cx="10.5" cy="2.8" r="2.2" fill="#2f8ff2"/><circle cx="2.3" cy="7.5" r="2.2" fill="#2f8ff2"/><circle cx="10.5" cy="11" r="2.2" fill="#2f8ff2"/></svg>
<div class="st" style="top:392px;background:#646464">On the way</div>
<svg style="left:676px;top:400px" width="11" height="9" viewBox="0 0 13 9"><path d="M1.5 1.5 L6.5 6.5 L11.5 1.5" fill="none" stroke="#fff" stroke-width="1.2"/></svg>
<div class="cell" style="left:707px;width:140px;top:398px">wuzr</div>
<div class="cell" style="left:847px;width:120px;top:398px">8025500005</div>
<div class="cell" style="left:967px;width:140px;top:398px">8025500005</div>
<div class="cell" style="left:1107px;width:135px;top:399px">444</div>
<div class="cell" style="left:1242px;width:120px;top:398px">test</div>
<div class="cell" style="left:1362px;width:140px;top:398px">20251223151127</div>
<div class="cell" style="left:1502px;width:170px;top:399px">tty(453456)</div>
<div class="a" style="left:312px;top:422px;width:1606px;height:35px;background:#fff"></div>
<div class="hl" style="left:312px;top:456px;width:1606px"></div>
<div class="cb" style="left:336px;top:431px"></div>
<div class="cell" style="left:367px;width:60px;top:433px">5</div>
<svg style="left:438px;top:432px" width="16" height="16" viewBox="0 0 16 16"><path d="M8.5 14.5H1.5C1 14.5 0.7 14.2 0.7 13.7V2.3C0.7 1.8 1 1.5 1.5 1.5H12C12.5 1.5 12.8 1.8 12.8 2.3V8" fill="none" stroke="#2f8ff2" stroke-width="1.3"/><path d="M3.7 0v2.5M8.6 0v2.5" stroke="#2f8ff2" stroke-width="1.2"/><path d="M2.3 5.3h6.5M2.3 7.8h4.3M2.3 10.6h3.5" stroke="#2f8ff2" stroke-width="1.3"/><circle cx="11.2" cy="11.2" r="3.5" fill="#fff" stroke="#2f8ff2" stroke-width="1.2"/><path d="M11.2 9.6v3.4" stroke="#2f8ff2" stroke-width="1.2"/></svg>
<svg style="left:470px;top:431px" width="13" height="16" viewBox="0 0 13 16"><path d="M3.3 7V4.2C3.3 2.2 4.6 0.9 6.3 0.9C8 0.9 9.3 2.2 9.3 4.2V4.7" fill="none" stroke="#6a6a6a" stroke-width="1.7"/><rect x="0.2" y="6.5" width="12" height="8.6" rx="0.8" fill="#6a6a6a"/><rect x="5.4" y="9.5" width="1.6" height="3.6" fill="#fff"/><circle cx="6.2" cy="9.6" r="1.2" fill="#fff"/></svg>
<svg style="left:499px;top:432px" width="16" height="16" viewBox="0 0 16 16"><path d="M3.4 3.3 Q7.9 2.5 12.5 3.3 M3.4 3.3 L1.3 7.7 M12.5 3.3 L14.6 7.7" fill="none" stroke="#6a6a6a" stroke-width="1.3" stroke-linecap="round"/><path d="M4.6 12.8V7.4C4.6 5 6 3.9 7.9 3.9C9.8 3.9 11.2 5 11.2 7.4V12.8" fill="none" stroke="#6a6a6a" stroke-width="1.2"/><path d="M1.8 13H14" stroke="#6a6a6a" stroke-width="1.3"/><circle cx="7.9" cy="1.9" r="1.05" fill="#6a6a6a"/><circle cx="7.9" cy="14.1" r="1" fill="#6a6a6a"/></svg>
<svg style="left:536px;top:432px" width="14" height="14" viewBox="0 0 14 14"><path d="M10.5 2.8L2.3 7.5L10.5 11" fill="none" stroke="#2f8ff2" stroke-width="1.1"/><circle cx="10.5" cy="2.8" r="2.2" fill="#2f8ff2"/><circle cx="2.3" cy="7.5" r="2.2" fill="#2f8ff2"/><circle cx="10.5" cy="11" r="2.2" fill="#2f8ff2"/></svg>
<div class="st" style="top:427px;background:#3452af">Complete(Manual)</div>
<div class="cell" style="left:707px;width:140px;top:433px">wuzr</div>
<div class="cell" style="left:847px;width:120px;top:433px">804250900027</div>
<div class="cell" style="left:967px;width:140px;top:433px">804250900027</div>
<div class="cell" style="left:1107px;width:135px;top:434px">2025120231001</div>
<div class="cell" style="left:1242px;width:120px;top:433px">test</div>
<div class="cell" style="left:1362px;width:140px;top:433px">20251223151127</div>
<div class="cell" style="left:1502px;width:170px;top:434px">suly(15625215199)</div>
<div class="a" style="left:312px;top:457px;width:1606px;height:35px;background:#f5f7fa"></div>
<div class="hl" style="left:312px;top:491px;width:1606px"></div>
<div class="cb" style="left:336px;top:466px"></div>
<div class="cell" style="left:367px;width:60px;top:468px">6</div>
<svg style="left:438px;top:467px" width="16" height="16" viewBox="0 0 16 16"><path d="M8.5 14.5H1.5C1 14.5 0.7 14.2 0.7 13.7V2.3C0.7 1.8 1 1.5 1.5 1.5H12C12.5 1.5 12.8 1.8 12.8 2.3V8" fill="none" stroke="#2f8ff2" stroke-width="1.3"/><path d="M3.7 0v2.5M8.6 0v2.5" stroke="#2f8ff2" stroke-width="1.2"/><path d="M2.3 5.3h6.5M2.3 7.8h4.3M2.3 10.6h3.5" stroke="#2f8ff2" stroke-width="1.3"/><circle cx="11.2" cy="11.2" r="3.5" fill="#fff" stroke="#2f8ff2" stroke-width="1.2"/><path d="M11.2 9.6v3.4" stroke="#2f8ff2" stroke-width="1.2"/></svg>
<svg style="left:470px;top:466px" width="13" height="16" viewBox="0 0 13 16"><path d="M3.3 7V4.2C3.3 2.2 4.6 0.9 6.3 0.9C8 0.9 9.3 2.2 9.3 4.2V4.7" fill="none" stroke="#6a6a6a" stroke-width="1.7"/><rect x="0.2" y="6.5" width="12" height="8.6" rx="0.8" fill="#6a6a6a"/><rect x="5.4" y="9.5" width="1.6" height="3.6" fill="#fff"/><circle cx="6.2" cy="9.6" r="1.2" fill="#fff"/></svg>
<svg style="left:499px;top:467px" width="16" height="16" viewBox="0 0 16 16"><path d="M3.4 3.3 Q7.9 2.5 12.5 3.3 M3.4 3.3 L1.3 7.7 M12.5 3.3 L14.6 7.7" fill="none" stroke="#2f8ff2" stroke-width="1.3" stroke-linecap="round"/><path d="M4.6 12.8V7.4C4.6 5 6 3.9 7.9 3.9C9.8 3.9 11.2 5 11.2 7.4V12.8" fill="none" stroke="#2f8ff2" stroke-width="1.2"/><path d="M1.8 13H14" stroke="#2f8ff2" stroke-width="1.3"/><circle cx="7.9" cy="1.9" r="1.05" fill="#2f8ff2"/><circle cx="7.9" cy="14.1" r="1" fill="#2f8ff2"/></svg>
<svg style="left:536px;top:467px" width="14" height="14" viewBox="0 0 14 14"><path d="M10.5 2.8L2.3 7.5L10.5 11" fill="none" stroke="#2f8ff2" stroke-width="1.1"/><circle cx="10.5" cy="2.8" r="2.2" fill="#2f8ff2"/><circle cx="2.3" cy="7.5" r="2.2" fill="#2f8ff2"/><circle cx="10.5" cy="11" r="2.2" fill="#2f8ff2"/></svg>
<div class="st" style="top:462px;background:#3452af">Complete(Manual)</div>
<div class="cell" style="left:707px;width:140px;top:468px">JT800测试</div>
<div class="cell" style="left:847px;width:120px;top:468px">804250900018</div>
<div class="cell" style="left:967px;width:140px;top:468px">804250900018</div>
<div class="cell" style="left:1107px;width:135px;top:469px"></div>
<div class="cell" style="left:1242px;width:120px;top:468px">t</div>
<div class="cell" style="left:1362px;width:140px;top:468px">20251223191211</div>
<div class="cell" style="left:1502px;width:170px;top:469px"></div>
<div class="a" style="left:312px;top:492px;width:1606px;height:35px;background:#fff"></div>
<div class="hl" style="left:312px;top:526px;width:1606px"></div>
<div class="cb" style="left:336px;top:501px"></div>
<div class="cell" style="left:367px;width:60px;top:503px">7</div>
<svg style="left:438px;top:502px" width="16" height="16" viewBox="0 0 16 16"><path d="M8.5 14.5H1.5C1 14.5 0.7 14.2 0.7 13.7V2.3C0.7 1.8 1 1.5 1.5 1.5H12C12.5 1.5 12.8 1.8 12.8 2.3V8" fill="none" stroke="#2f8ff2" stroke-width="1.3"/><path d="M3.7 0v2.5M8.6 0v2.5" stroke="#2f8ff2" stroke-width="1.2"/><path d="M2.3 5.3h6.5M2.3 7.8h4.3M2.3 10.6h3.5" stroke="#2f8ff2" stroke-width="1.3"/><circle cx="11.2" cy="11.2" r="3.5" fill="#fff" stroke="#2f8ff2" stroke-width="1.2"/><path d="M11.2 9.6v3.4" stroke="#2f8ff2" stroke-width="1.2"/></svg>
<svg style="left:470px;top:501px" width="13" height="16" viewBox="0 0 13 16"><path d="M3.3 7V4.2C3.3 2.2 4.6 0.9 6.3 0.9C8 0.9 9.3 2.2 9.3 4.2V4.7" fill="none" stroke="#6a6a6a" stroke-width="1.7"/><rect x="0.2" y="6.5" width="12" height="8.6" rx="0.8" fill="#6a6a6a"/><rect x="5.4" y="9.5" width="1.6" height="3.6" fill="#fff"/><circle cx="6.2" cy="9.6" r="1.2" fill="#fff"/></svg>
<svg style="left:499px;top:502px" width="16" height="16" viewBox="0 0 16 16"><path d="M3.4 3.3 Q7.9 2.5 12.5 3.3 M3.4 3.3 L1.3 7.7 M12.5 3.3 L14.6 7.7" fill="none" stroke="#6a6a6a" stroke-width="1.3" stroke-linecap="round"/><path d="M4.6 12.8V7.4C4.6 5 6 3.9 7.9 3.9C9.8 3.9 11.2 5 11.2 7.4V12.8" fill="none" stroke="#6a6a6a" stroke-width="1.2"/><path d="M1.8 13H14" stroke="#6a6a6a" stroke-width="1.3"/><circle cx="7.9" cy="1.9" r="1.05" fill="#6a6a6a"/><circle cx="7.9" cy="14.1" r="1" fill="#6a6a6a"/></svg>
<svg style="left:536px;top:502px" width="14" height="14" viewBox="0 0 14 14"><path d="M10.5 2.8L2.3 7.5L10.5 11" fill="none" stroke="#2f8ff2" stroke-width="1.1"/><circle cx="10.5" cy="2.8" r="2.2" fill="#2f8ff2"/><circle cx="2.3" cy="7.5" r="2.2" fill="#2f8ff2"/><circle cx="10.5" cy="11" r="2.2" fill="#2f8ff2"/></svg>
<div class="st" style="top:497px;background:#5dae32">Completed</div>
<div class="cell" style="left:707px;width:140px;top:503px">软件测试部</div>
<div class="cell" style="left:847px;width:120px;top:503px">804250900192</div>
<div class="cell" style="left:967px;width:140px;top:503px">804250900192</div>
<div class="cell" style="left:1107px;width:135px;top:504px">BOC-A-12062025-0003</div>
<div class="cell" style="left:1242px;width:120px;top:503px">海谷-天格02</div>
<div class="cell" style="left:1362px;width:140px;top:503px">002</div>
<div class="cell" style="left:1502px;width:170px;top:504px"></div>
<div class="a" style="left:312px;top:527px;width:1606px;height:35px;background:#fafafa"></div>
<div class="hl" style="left:312px;top:561px;width:1606px"></div>
<div class="cb" style="left:336px;top:536px"></div>
<div class="cell" style="left:367px;width:60px;top:538px">8</div>
<svg style="left:438px;top:537px" width="16" height="16" viewBox="0 0 16 16"><path d="M8.5 14.5H1.5C1 14.5 0.7 14.2 0.7 13.7V2.3C0.7 1.8 1 1.5 1.5 1.5H12C12.5 1.5 12.8 1.8 12.8 2.3V8" fill="none" stroke="#2f8ff2" stroke-width="1.3"/><path d="M3.7 0v2.5M8.6 0v2.5" stroke="#2f8ff2" stroke-width="1.2"/><path d="M2.3 5.3h6.5M2.3 7.8h4.3M2.3 10.6h3.5" stroke="#2f8ff2" stroke-width="1.3"/><circle cx="11.2" cy="11.2" r="3.5" fill="#fff" stroke="#2f8ff2" stroke-width="1.2"/><path d="M11.2 9.6v3.4" stroke="#2f8ff2" stroke-width="1.2"/></svg>
<svg style="left:470px;top:536px" width="13" height="16" viewBox="0 0 13 16"><path d="M3.3 7V4.2C3.3 2.2 4.6 0.9 6.3 0.9C8 0.9 9.3 2.2 9.3 4.2V4.7" fill="none" stroke="#2f8ff2" stroke-width="1.7"/><rect x="0.2" y="6.5" width="12" height="8.6" rx="0.8" fill="#2f8ff2"/><rect x="5.4" y="9.5" width="1.6" height="3.6" fill="#fff"/><circle cx="6.2" cy="9.6" r="1.2" fill="#fff"/></svg>
<svg style="left:499px;top:537px" width="16" height="16" viewBox="0 0 16 16"><path d="M3.4 3.3 Q7.9 2.5 12.5 3.3 M3.4 3.3 L1.3 7.7 M12.5 3.3 L14.6 7.7" fill="none" stroke="#2f8ff2" stroke-width="1.3" stroke-linecap="round"/><path d="M4.6 12.8V7.4C4.6 5 6 3.9 7.9 3.9C9.8 3.9 11.2 5 11.2 7.4V12.8" fill="none" stroke="#2f8ff2" stroke-width="1.2"/><path d="M1.8 13H14" stroke="#2f8ff2" stroke-width="1.3"/><circle cx="7.9" cy="1.9" r="1.05" fill="#2f8ff2"/><circle cx="7.9" cy="14.1" r="1" fill="#2f8ff2"/></svg>
<svg style="left:536px;top:537px" width="14" height="14" viewBox="0 0 14 14"><path d="M10.5 2.8L2.3 7.5L10.5 11" fill="none" stroke="#2f8ff2" stroke-width="1.1"/><circle cx="10.5" cy="2.8" r="2.2" fill="#2f8ff2"/><circle cx="2.3" cy="7.5" r="2.2" fill="#2f8ff2"/><circle cx="10.5" cy="11" r="2.2" fill="#2f8ff2"/></svg>
<div class="st" style="top:532px;background:#3452af">Complete(Manual)</div>
<div class="cell" style="left:707px;width:140px;top:538px">wuzr</div>
<div class="cell" style="left:847px;width:120px;top:538px">804250900027</div>
<div class="cell" style="left:967px;width:140px;top:538px">804250900027</div>
<div class="cell" style="left:1107px;width:135px;top:539px">20251123001</div>
<div class="cell" style="left:1242px;width:120px;top:538px">test</div>
<div class="cell" style="left:1362px;width:140px;top:538px">20251223151127</div>
<div class="cell" style="left:1502px;width:170px;top:539px">suly(15625142563)</div>
<div class="a" style="left:312px;top:562px;width:1606px;height:35px;background:#fff"></div>
<div class="hl" style="left:312px;top:596px;width:1606px"></div>
<div class="cb" style="left:336px;top:571px"></div>
<div class="cell" style="left:367px;width:60px;top:573px">9</div>
<svg style="left:438px;top:572px" width="16" height="16" viewBox="0 0 16 16"><path d="M8.5 14.5H1.5C1 14.5 0.7 14.2 0.7 13.7V2.3C0.7 1.8 1 1.5 1.5 1.5H12C12.5 1.5 12.8 1.8 12.8 2.3V8" fill="none" stroke="#2f8ff2" stroke-width="1.3"/><path d="M3.7 0v2.5M8.6 0v2.5" stroke="#2f8ff2" stroke-width="1.2"/><path d="M2.3 5.3h6.5M2.3 7.8h4.3M2.3 10.6h3.5" stroke="#2f8ff2" stroke-width="1.3"/><circle cx="11.2" cy="11.2" r="3.5" fill="#fff" stroke="#2f8ff2" stroke-width="1.2"/><path d="M11.2 9.6v3.4" stroke="#2f8ff2" stroke-width="1.2"/></svg>
<svg style="left:470px;top:571px" width="13" height="16" viewBox="0 0 13 16"><path d="M3.3 7V4.2C3.3 2.2 4.6 0.9 6.3 0.9C8 0.9 9.3 2.2 9.3 4.2V4.7" fill="none" stroke="#6a6a6a" stroke-width="1.7"/><rect x="0.2" y="6.5" width="12" height="8.6" rx="0.8" fill="#6a6a6a"/><rect x="5.4" y="9.5" width="1.6" height="3.6" fill="#fff"/><circle cx="6.2" cy="9.6" r="1.2" fill="#fff"/></svg>
<svg style="left:499px;top:572px" width="16" height="16" viewBox="0 0 16 16"><path d="M3.4 3.3 Q7.9 2.5 12.5 3.3 M3.4 3.3 L1.3 7.7 M12.5 3.3 L14.6 7.7" fill="none" stroke="#6a6a6a" stroke-width="1.3" stroke-linecap="round"/><path d="M4.6 12.8V7.4C4.6 5 6 3.9 7.9 3.9C9.8 3.9 11.2 5 11.2 7.4V12.8" fill="none" stroke="#6a6a6a" stroke-width="1.2"/><path d="M1.8 13H14" stroke="#6a6a6a" stroke-width="1.3"/><circle cx="7.9" cy="1.9" r="1.05" fill="#6a6a6a"/><circle cx="7.9" cy="14.1" r="1" fill="#6a6a6a"/></svg>
<svg style="left:536px;top:572px" width="14" height="14" viewBox="0 0 14 14"><path d="M10.5 2.8L2.3 7.5L10.5 11" fill="none" stroke="#2f8ff2" stroke-width="1.1"/><circle cx="10.5" cy="2.8" r="2.2" fill="#2f8ff2"/><circle cx="2.3" cy="7.5" r="2.2" fill="#2f8ff2"/><circle cx="10.5" cy="11" r="2.2" fill="#2f8ff2"/></svg>
<div class="st" style="top:567px;background:#646464">No departure</div>
<svg style="left:676px;top:575px" width="11" height="9" viewBox="0 0 13 9"><path d="M1.5 1.5 L6.5 6.5 L11.5 1.5" fill="none" stroke="#fff" stroke-width="1.2"/></svg>
<div class="cell" style="left:707px;width:140px;top:573px">久通中试部</div>
<div class="cell" style="left:847px;width:120px;top:573px">207010199999</div>
<div class="cell" style="left:967px;width:140px;top:573px">207010199999</div>
<div class="cell" style="left:1107px;width:135px;top:574px"></div>
<div class="cell" style="left:1242px;width:120px;top:573px">testtesttesttestte...</div>
<div class="cell" style="left:1362px;width:140px;top:573px">sttesttesttesttsttes</div>
<div class="cell" style="left:1502px;width:170px;top:574px"></div>
<div class="a" style="left:312px;top:597px;width:1606px;height:35px;background:#fafafa"></div>
<div class="hl" style="left:312px;top:631px;width:1606px"></div>
<div class="cb" style="left:336px;top:606px"></div>
<div class="cell" style="left:367px;width:60px;top:608px">10</div>
<svg style="left:438px;top:607px" width="16" height="16" viewBox="0 0 16 16"><path d="M8.5 14.5H1.5C1 14.5 0.7 14.2 0.7 13.7V2.3C0.7 1.8 1 1.5 1.5 1.5H12C12.5 1.5 12.8 1.8 12.8 2.3V8" fill="none" stroke="#2f8ff2" stroke-width="1.3"/><path d="M3.7 0v2.5M8.6 0v2.5" stroke="#2f8ff2" stroke-width="1.2"/><path d="M2.3 5.3h6.5M2.3 7.8h4.3M2.3 10.6h3.5" stroke="#2f8ff2" stroke-width="1.3"/><circle cx="11.2" cy="11.2" r="3.5" fill="#fff" stroke="#2f8ff2" stroke-width="1.2"/><path d="M11.2 9.6v3.4" stroke="#2f8ff2" stroke-width="1.2"/></svg>
<svg style="left:470px;top:606px" width="13" height="16" viewBox="0 0 13 16"><path d="M3.3 7V4.2C3.3 2.2 4.6 0.9 6.3 0.9C8 0.9 9.3 2.2 9.3 4.2V4.7" fill="none" stroke="#2f8ff2" stroke-width="1.7"/><rect x="0.2" y="6.5" width="12" height="8.6" rx="0.8" fill="#2f8ff2"/><rect x="5.4" y="9.5" width="1.6" height="3.6" fill="#fff"/><circle cx="6.2" cy="9.6" r="1.2" fill="#fff"/></svg>
<svg style="left:499px;top:607px" width="16" height="16" viewBox="0 0 16 16"><path d="M3.4 3.3 Q7.9 2.5 12.5 3.3 M3.4 3.3 L1.3 7.7 M12.5 3.3 L14.6 7.7" fill="none" stroke="#6a6a6a" stroke-width="1.3" stroke-linecap="round"/><path d="M4.6 12.8V7.4C4.6 5 6 3.9 7.9 3.9C9.8 3.9 11.2 5 11.2 7.4V12.8" fill="none" stroke="#6a6a6a" stroke-width="1.2"/><path d="M1.8 13H14" stroke="#6a6a6a" stroke-width="1.3"/><circle cx="7.9" cy="1.9" r="1.05" fill="#6a6a6a"/><circle cx="7.9" cy="14.1" r="1" fill="#6a6a6a"/></svg>
<svg style="left:536px;top:607px" width="14" height="14" viewBox="0 0 14 14"><path d="M10.5 2.8L2.3 7.5L10.5 11" fill="none" stroke="#2f8ff2" stroke-width="1.1"/><circle cx="10.5" cy="2.8" r="2.2" fill="#2f8ff2"/><circle cx="2.3" cy="7.5" r="2.2" fill="#2f8ff2"/><circle cx="10.5" cy="11" r="2.2" fill="#2f8ff2"/></svg>
<div class="st" style="top:602px;background:#5dae32">Completed</div>
<div class="cell" style="left:707px;width:140px;top:608px">软件测试部</div>
<div class="cell" style="left:847px;width:120px;top:608px">804250900192</div>
<div class="cell" style="left:967px;width:140px;top:608px">804250900192</div>
<div class="cell" style="left:1107px;width:135px;top:609px">BOC-A-12062025-0002</div>
<div class="cell" style="left:1242px;width:120px;top:608px">海谷-天格02</div>
<div class="cell" style="left:1362px;width:140px;top:608px">002</div>
<div class="cell" style="left:1502px;width:170px;top:609px"></div>
<div class="a" style="left:312px;top:632px;width:1606px;height:35px;background:#fff"></div>
<div class="hl" style="left:312px;top:666px;width:1606px"></div>
<div class="cb" style="left:336px;top:641px"></div>
<div class="cell" style="left:367px;width:60px;top:643px">11</div>
<svg style="left:438px;top:642px" width="16" height="16" viewBox="0 0 16 16"><path d="M8.5 14.5H1.5C1 14.5 0.7 14.2 0.7 13.7V2.3C0.7 1.8 1 1.5 1.5 1.5H12C12.5 1.5 12.8 1.8 12.8 2.3V8" fill="none" stroke="#2f8ff2" stroke-width="1.3"/><path d="M3.7 0v2.5M8.6 0v2.5" stroke="#2f8ff2" stroke-width="1.2"/><path d="M2.3 5.3h6.5M2.3 7.8h4.3M2.3 10.6h3.5" stroke="#2f8ff2" stroke-width="1.3"/><circle cx="11.2" cy="11.2" r="3.5" fill="#fff" stroke="#2f8ff2" stroke-width="1.2"/><path d="M11.2 9.6v3.4" stroke="#2f8ff2" stroke-width="1.2"/></svg>
<svg style="left:470px;top:641px" width="13" height="16" viewBox="0 0 13 16"><path d="M3.3 7V4.2C3.3 2.2 4.6 0.9 6.3 0.9C8 0.9 9.3 2.2 9.3 4.2V4.7" fill="none" stroke="#2f8ff2" stroke-width="1.7"/><rect x="0.2" y="6.5" width="12" height="8.6" rx="0.8" fill="#2f8ff2"/><rect x="5.4" y="9.5" width="1.6" height="3.6" fill="#fff"/><circle cx="6.2" cy="9.6" r="1.2" fill="#fff"/></svg>
<svg style="left:499px;top:642px" width="16" height="16" viewBox="0 0 16 16"><path d="M3.4 3.3 Q7.9 2.5 12.5 3.3 M3.4 3.3 L1.3 7.7 M12.5 3.3 L14.6 7.7" fill="none" stroke="#6a6a6a" stroke-width="1.3" stroke-linecap="round"/><path d="M4.6 12.8V7.4C4.6 5 6 3.9 7.9 3.9C9.8 3.9 11.2 5 11.2 7.4V12.8" fill="none" stroke="#6a6a6a" stroke-width="1.2"/><path d="M1.8 13H14" stroke="#6a6a6a" stroke-width="1.3"/><circle cx="7.9" cy="1.9" r="1.05" fill="#6a6a6a"/><circle cx="7.9" cy="14.1" r="1" fill="#6a6a6a"/></svg>
<svg style="left:536px;top:642px" width="14" height="14" viewBox="0 0 14 14"><path d="M10.5 2.8L2.3 7.5L10.5 11" fill="none" stroke="#2f8ff2" stroke-width="1.1"/><circle cx="10.5" cy="2.8" r="2.2" fill="#2f8ff2"/><circle cx="2.3" cy="7.5" r="2.2" fill="#2f8ff2"/><circle cx="10.5" cy="11" r="2.2" fill="#2f8ff2"/></svg>
<div class="st" style="top:637px;background:#5dae32">Completed</div>
<div class="cell" style="left:707px;width:140px;top:643px">软件测试部</div>
<div class="cell" style="left:847px;width:120px;top:643px">804250900192</div>
<div class="cell" style="left:967px;width:140px;top:643px">804250900192</div>
<div class="cell" style="left:1107px;width:135px;top:644px">BOC-A-12062025-0001</div>
<div class="cell" style="left:1242px;width:120px;top:643px">海谷-天格02</div>
<div class="cell" style="left:1362px;width:140px;top:643px">002</div>
<div class="cell" style="left:1502px;width:170px;top:644px"></div>
<div class="a" style="left:312px;top:667px;width:1606px;height:35px;background:#fafafa"></div>
<div class="hl" style="left:312px;top:701px;width:1606px"></div>
<div class="cb" style="left:336px;top:676px"></div>
<div class="cell" style="left:367px;width:60px;top:678px">12</div>
<svg style="left:438px;top:677px" width="16" height="16" viewBox="0 0 16 16"><path d="M8.5 14.5H1.5C1 14.5 0.7 14.2 0.7 13.7V2.3C0.7 1.8 1 1.5 1.5 1.5H12C12.5 1.5 12.8 1.8 12.8 2.3V8" fill="none" stroke="#2f8ff2" stroke-width="1.3"/><path d="M3.7 0v2.5M8.6 0v2.5" stroke="#2f8ff2" stroke-width="1.2"/><path d="M2.3 5.3h6.5M2.3 7.8h4.3M2.3 10.6h3.5" stroke="#2f8ff2" stroke-width="1.3"/><circle cx="11.2" cy="11.2" r="3.5" fill="#fff" stroke="#2f8ff2" stroke-width="1.2"/><path d="M11.2 9.6v3.4" stroke="#2f8ff2" stroke-width="1.2"/></svg>
<svg style="left:470px;top:676px" width="13" height="16" viewBox="0 0 13 16"><path d="M3.3 7V4.2C3.3 2.2 4.6 0.9 6.3 0.9C8 0.9 9.3 2.2 9.3 4.2V4.7" fill="none" stroke="#2f8ff2" stroke-width="1.7"/><rect x="0.2" y="6.5" width="12" height="8.6" rx="0.8" fill="#2f8ff2"/><rect x="5.4" y="9.5" width="1.6" height="3.6" fill="#fff"/><circle cx="6.2" cy="9.6" r="1.2" fill="#fff"/></svg>
<svg style="left:499px;top:677px" width="16" height="16" viewBox="0 0 16 16"><path d="M3.4 3.3 Q7.9 2.5 12.5 3.3 M3.4 3.3 L1.3 7.7 M12.5 3.3 L14.6 7.7" fill="none" stroke="#2f8ff2" stroke-width="1.3" stroke-linecap="round"/><path d="M4.6 12.8V7.4C4.6 5 6 3.9 7.9 3.9C9.8 3.9 11.2 5 11.2 7.4V12.8" fill="none" stroke="#2f8ff2" stroke-width="1.2"/><path d="M1.8 13H14" stroke="#2f8ff2" stroke-width="1.3"/><circle cx="7.9" cy="1.9" r="1.05" fill="#2f8ff2"/><circle cx="7.9" cy="14.1" r="1" fill="#2f8ff2"/></svg>
<svg style="left:536px;top:677px" width="14" height="14" viewBox="0 0 14 14"><path d="M10.5 2.8L2.3 7.5L10.5 11" fill="none" stroke="#2f8ff2" stroke-width="1.1"/><circle cx="10.5" cy="2.8" r="2.2" fill="#2f8ff2"/><circle cx="2.3" cy="7.5" r="2.2" fill="#2f8ff2"/><circle cx="10.5" cy="11" r="2.2" fill="#2f8ff2"/></svg>
<div class="st" style="top:672px;background:#3452af">Complete(Manual)</div>
<div class="cell" style="left:707px;width:140px;top:678px">wuzr</div>
<div class="cell" style="left:847px;width:120px;top:678px">8025500005</div>
<div class="cell" style="left:967px;width:140px;top:678px">8025500005</div>
<div class="cell" style="left:1107px;width:135px;top:679px">4543543</div>
<div class="cell" style="left:1242px;width:120px;top:678px">test</div>
<div class="cell" style="left:1362px;width:140px;top:678px">20251223151127</div>
<div class="cell" style="left:1502px;width:170px;top:679px">54354(534534543)</div>
<div class="vl" style="left:367px;top:256px;height:446px"></div>
<div class="vl" style="left:427px;top:256px;height:446px"></div>
<div class="vl" style="left:567px;top:256px;height:446px"></div>
<div class="vl" style="left:707px;top:256px;height:446px"></div>
<div class="vl" style="left:847px;top:256px;height:446px"></div>
<div class="vl" style="left:967px;top:256px;height:446px"></div>
<div class="vl" style="left:1107px;top:256px;height:446px"></div>
<div class="vl" style="left:1242px;top:256px;height:446px"></div>
<div class="vl" style="left:1362px;top:256px;height:446px"></div>
<div class="vl" style="left:1502px;top:256px;height:446px"></div>
<div class="vl" style="left:1672px;top:256px;height:446px"></div>
<div class="vl" style="left:1842px;top:256px;height:446px"></div>
<div class="a" style="left:312px;top:898px;width:1607px;height:14px;background:#e9effc;border-bottom:1px solid #e1e6f0"></div>
<div class="a" style="left:312px;top:898px;width:469px;height:13px;background:#8eaef4;border:1px solid #86a8f2"></div>
<svg style="left:337px;top:927px" width="8" height="12" viewBox="0 0 8 12"><path d="M6.5 1L1.5 6L6.5 11" fill="none" stroke="#b0b3b8" stroke-width="1.3"/></svg>
<div class="a" style="left:362px;top:919px;width:36px;height:28px;background:#6aaadb"></div>
<div class="t" style="left:362px;top:927px;width:36px;text-align:center;font-size:13px;font-weight:bold;color:#fff">1</div>
<svg style="left:415px;top:927px" width="8" height="12" viewBox="0 0 8 12"><path d="M1.5 1L6.5 6L1.5 11" fill="none" stroke="#b0b3b8" stroke-width="1.3"/></svg>
<div class="t" style="left:458px;top:926px;font-size:13px;color:#555">Go to</div>
<div class="a" style="left:493px;top:919px;width:46px;height:28px;border:1px solid #dcdfe6;border-radius:3px;background:#fff"></div>
<div class="t" style="left:493px;top:926px;width:46px;text-align:center;font-size:13px;color:#555">1</div>
<div class="t" style="left:554px;top:926px;font-size:13px;color:#555">Total 12</div>
<div class="a" style="left:614px;top:919px;width:100px;height:28px;border:1px solid #dcdfe6;border-radius:3px;background:#fff"></div>
<div class="t" style="left:632px;top:926px;font-size:13px;color:#555">50/page</div>
<svg style="left:697px;top:930px" width="12" height="7" viewBox="0 0 12 7"><path d="M1 1 L6 6 L11 1" fill="none" stroke="#c0c4cc" stroke-width="1.2"/></svg>
<svg style="left:310px;top:504px" width="16" height="78" viewBox="0 0 16 78"><path d="M0.5 0.5 L13 8 Q15 9.5 15 12 V66 Q15 68.5 13 70 L0.5 77.5Z" fill="#f9f9f9" stroke="#dcdcdc" stroke-width="1"/><path d="M4.5 31 L10.5 39 L4.5 47" fill="none" stroke="#0d5bc4" stroke-width="1.6"/></svg>
<div class="a" style="left:323px;top:190px;width:44px;height:241px;border:3px solid #e81c24"></div>
<div class="a" style="left:33px;top:468px;width:147px;height:36px;border:3px solid #e81c24"></div>
<svg style="left:0;top:0" width="1920" height="948" viewBox="0 0 1920 948"><line x1="169.6" y1="458" x2="310" y2="356.5" stroke="#e81c24" stroke-width="4" stroke-linecap="round"/><path d="M322 348 L305.5 352 L313.5 362.5Z" fill="#e81c24"/><line x1="369.3" y1="237.3" x2="1440" y2="120.3" stroke="#e81c24" stroke-width="4" stroke-linecap="round"/><path d="M1452 119 L1436 114 L1437.5 127.5Z" fill="#e81c24"/></svg>
</body></html>
